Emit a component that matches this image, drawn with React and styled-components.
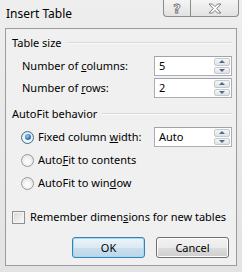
import React from 'react';
import styled, { createGlobalStyle } from 'styled-components';

const GlobalStyle = createGlobalStyle`
  html, body {
    margin: 0;
    padding: 0;
  }
  body {
    font-family: "Noto Sans", "Open Sans", sans-serif;
    font-size: 11px;
    color: #000;
  }
`;

const Window = styled.div`
  width: 242px;
  height: 272px;
  box-sizing: border-box;
  display: flex;
  flex-direction: column;
  padding: 0 5px 6px;
  background: linear-gradient(#eeeeee, #e3e3e3);
`;

const TitleBar = styled.div`
  height: 28px;
  display: flex;
  align-items: flex-start;
  flex-shrink: 0;
`;

const Title = styled.div`
  flex: 1;
  padding: 6px 0 0 1px;
  font-size: 12px;
  line-height: 16px;
`;

const CaptionButtons = styled.div`
  display: flex;
  margin-right: -2px;
`;

const CaptionButton = styled.div`
  width: ${p => p.$w}px;
  height: 17px;
  box-sizing: border-box;
  display: flex;
  align-items: center;
  justify-content: center;
  border: 1px solid #8c8c8c;
  border-top: none;
  border-left: ${p => (p.$first ? '1px solid #8c8c8c' : 'none')};
  border-radius: ${p => (p.$first ? '0 0 0 4px' : '0 0 4px 0')};
  background: linear-gradient(#f4f4f4, #e2e2e2);
`;

const HelpGlyph = styled.span`
  font-family: "DejaVu Sans", sans-serif;
  font-weight: bold;
  font-size: 13px;
  line-height: 1;
  color: #fbfbfb;
  -webkit-text-stroke: 0.8px #6e6e6e;
`;

const Client = styled.div`
  flex: 1;
  display: flex;
  flex-direction: column;
  border: 1px solid #9c9c9c;
  background: #f0f0f0;
  padding: 6px 4px 7px 6px;
`;

const SectionHeader = styled.div`
  display: flex;
  align-items: center;
  gap: 5px;
  height: 16px;
  line-height: 16px;
  margin-top: ${p => p.$top || 0}px;

  &::after {
    content: '';
    flex: 1;
    border-top: 1px solid #d9d9d9;
    border-bottom: 1px solid #fafafa;
  }
`;

const Row = styled.div`
  display: flex;
  align-items: center;
  height: 20px;
  margin-top: ${p => p.$top}px;
  padding-left: ${p => p.$indent}px;
`;

const Label = styled.span`
  flex: 1;
  line-height: 16px;
  white-space: nowrap;
`;

const U = styled.span`
  text-decoration: underline;
  text-underline-offset: 1px;
`;

const SpinBox = styled.div`
  width: 78px;
  height: 20px;
  flex-shrink: 0;
  box-sizing: border-box;
  display: flex;
  border: 1px solid #abadb3;
  border-top-color: #a0a3a8;
  background: #fff;
`;

const SpinValue = styled.div`
  flex: 1;
  padding-left: 4px;
  line-height: 18px;
`;

const SpinButtons = styled.div`
  width: 16px;
  display: flex;
  flex-direction: column;
  gap: 1px;
  padding: 1px 1px 1px 0;
`;

const SpinButton = styled.div`
  flex: 1;
  display: flex;
  align-items: center;
  justify-content: center;
  border: 1px solid #c6c9cd;
  border-radius: 2px;
  background: linear-gradient(#f6f6f6, #dfe2e6);

  &::before {
    content: '';
    border-left: 3px solid transparent;
    border-right: 3px solid transparent;
    ${p => (p.$down ? 'border-top: 3px solid #4f6a8c;' : 'border-bottom: 3px solid #4f6a8c;')}
  }
`;

const Radio = styled.span`
  width: 13px;
  height: 13px;
  flex-shrink: 0;
  box-sizing: border-box;
  margin-right: 4px;
  border-radius: 50%;
  border: 1px solid ${p => (p.$checked ? '#3d6c8f' : '#9a9a9a')};
  background: radial-gradient(circle at 50% 60%, #fbfbfb 20%, #dcdcdc 95%);
  display: flex;
  align-items: center;
  justify-content: center;

  &::after {
    content: '';
    display: ${p => (p.$checked ? 'block' : 'none')};
    width: 6px;
    height: 6px;
    border-radius: 50%;
    background: radial-gradient(circle at 40% 35%, #9ad0f7 0%, #2b7cc4 55%, #0d4d8a 100%);
  }
`;

const CheckRow = styled.div`
  display: flex;
  align-items: center;
  height: 16px;
  margin-top: 16px;
`;

const CheckBox = styled.span`
  width: 13px;
  height: 13px;
  flex-shrink: 0;
  box-sizing: border-box;
  margin-right: 5px;
  border: 1px solid #8e8f8f;
  background: linear-gradient(135deg, #d6d6d6, #fbfbfb);
  box-shadow: inset 0 0 0 1px #f4f4f4;
`;

const ButtonRow = styled.div`
  display: flex;
  justify-content: flex-end;
  gap: 11px;
  margin-top: 12px;
  padding-right: 3px;
`;

const Button = styled.div`
  width: 73px;
  height: 21px;
  box-sizing: border-box;
  display: flex;
  align-items: center;
  justify-content: center;
  border-radius: 3px;
  border: 1px solid ${p => (p.$default ? '#3c7fb1' : '#707070')};
  background: ${p =>
    p.$default
      ? 'linear-gradient(#ebf4fa 0%, #dceaf4 50%, #c9dfed 51%, #bcd6ea 100%)'
      : 'linear-gradient(#f2f2f2 0%, #ebebeb 50%, #dddddd 51%, #cfcfcf 100%)'};
  box-shadow: inset 0 0 0 1px ${p => (p.$default ? '#9fdcf5' : '#fcfcfc')};
`;

const CloseIcon = () => (
  <svg width="14" height="11" viewBox="0 0 14 11">
    <path
      d="M1 1 H4.5 L7 3.6 L9.5 1 H13 L8.8 5.5 L13 10 H9.5 L7 7.4 L4.5 10 H1 L5.2 5.5 Z"
      fill="#fafafa"
      stroke="#747474"
      strokeWidth="0.9"
      strokeLinejoin="round"
    />
  </svg>
);

const Spin = ({ value }) => (
  <SpinBox>
    <SpinValue>{value}</SpinValue>
    <SpinButtons>
      <SpinButton />
      <SpinButton $down />
    </SpinButtons>
  </SpinBox>
);

export default function App() {
  return (
    <>
      <GlobalStyle />
      <Window>
        <TitleBar>
          <Title>Insert Table</Title>
          <CaptionButtons>
            <CaptionButton $w={28} $first>
              <HelpGlyph>?</HelpGlyph>
            </CaptionButton>
            <CaptionButton $w={48}>
              <CloseIcon />
            </CaptionButton>
          </CaptionButtons>
        </TitleBar>
        <Client>
          <SectionHeader>Table size</SectionHeader>
          <Row $top={5} $indent={10}>
            <Label>Number of <U>c</U>olumns:</Label>
            <Spin value="5" />
          </Row>
          <Row $top={2} $indent={10}>
            <Label>Number of <U>r</U>ows:</Label>
            <Spin value="2" />
          </Row>
          <SectionHeader $top={8}>AutoFit behavior</SectionHeader>
          <Row $top={5} $indent={9}>
            <Radio $checked />
            <Label>Fixed column <U>w</U>idth:</Label>
            <Spin value="Auto" />
          </Row>
          <Row $top={3} $indent={9}>
            <Radio />
            <Label>Auto<U>F</U>it to contents</Label>
          </Row>
          <Row $top={3} $indent={9}>
            <Radio />
            <Label>AutoFit to win<U>d</U>ow</Label>
          </Row>
          <CheckRow>
            <CheckBox />
            <Label>Remember dimen<U>s</U>ions for new tables</Label>
          </CheckRow>
          <ButtonRow>
            <Button $default>OK</Button>
            <Button>Cancel</Button>
          </ButtonRow>
        </Client>
      </Window>
    </>
  );
}
